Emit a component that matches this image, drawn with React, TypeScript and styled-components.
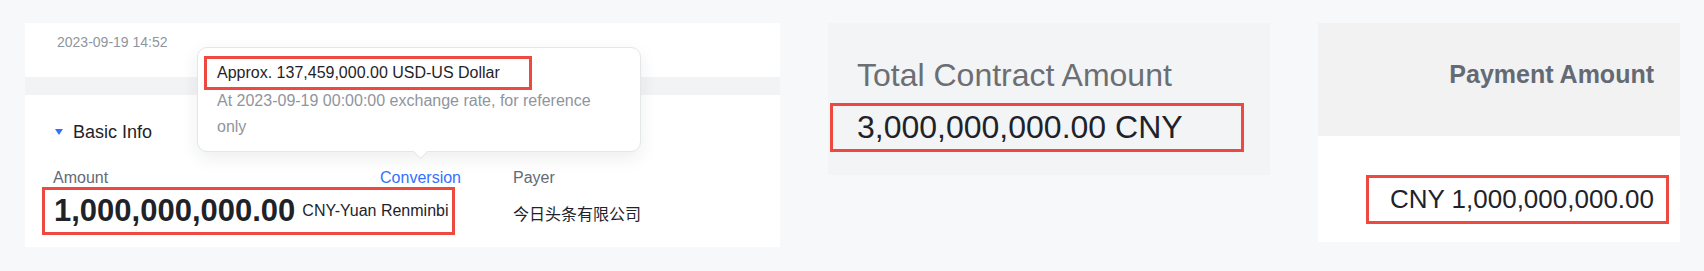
import React from 'react';
import styled, { createGlobalStyle } from 'styled-components';

const GlobalStyle = createGlobalStyle`
  html, body {
    margin: 0;
    padding: 0;
    height: 100%;
    background: #f7f8fa;
  }
  body {
    font-family: "Liberation Sans", Arial, "Noto Sans CJK SC", sans-serif;
    color: #1f2329;
  }
`;

const Page = styled.div`
  display: flex;
  align-items: flex-start;
  gap: 48px;
  padding: 23px 0 0 25px;
  height: 271px;
  box-sizing: border-box;
  overflow: hidden;
`;

const Highlight = styled.div<{ $width?: number }>`
  display: inline-flex;
  align-items: center;
  box-sizing: border-box;
  border: 3px solid #ec4a41;
  ${(p) => (p.$width ? `width: ${p.$width}px;` : '')}
  white-space: nowrap;
  overflow: hidden;
`;

/* ---------- detail panel ---------- */

const DetailPanel = styled.div`
  position: relative;
  width: 755px;
  height: 224px;
  display: flex;
  flex-direction: column;
  background: #f2f3f5;
`;

const TopSection = styled.div`
  background: #fff;
  height: 54px;
  padding-left: 32px;
  overflow: hidden;
  box-sizing: border-box;
`;

// last line of the message above, scrolled almost out of view
const ClippedLine = styled.div`
  margin-top: -19px;
  font-size: 14px;
  line-height: 20px;
  color: #8f959e;
  white-space: nowrap;
`;

const TimeText = styled.div`
  margin-top: 8px;
  font-size: 14px;
  line-height: 20px;
  color: #8f959e;
`;

const InfoCard = styled.div`
  margin-top: 18px;
  flex: 1;
  background: #fff;
  padding: 25px 0 0 28px;
`;

const SectionTitle = styled.div`
  display: flex;
  align-items: center;
  gap: 10px;
  font-size: 18px;
  line-height: 24px;
  font-weight: 500;
  color: #1f2329;
  padding-left: 2px;
`;

const Caret = styled.span`
  width: 0;
  height: 0;
  border-left: 4px solid transparent;
  border-right: 4px solid transparent;
  border-top: 6px solid #3370ff;
`;

const FieldGrid = styled.div`
  margin-top: 23px;
  display: grid;
  grid-template-columns: 408px auto;
  column-gap: 52px;
  align-items: center;
`;

const LabelRow = styled.div`
  display: flex;
  justify-content: space-between;
`;

const Label = styled.span`
  font-size: 16px;
  line-height: 22px;
  color: #646a73;
`;

const LinkText = styled.span`
  font-size: 16px;
  line-height: 22px;
  color: #3370ff;
`;

const AmountBox = styled(Highlight)`
  margin: -2px 0 0 -11px;
  height: 48px;
  padding-left: 9px;
  gap: 7px;
`;

const BigNumber = styled.span`
  font-size: 31px;
  line-height: 42px;
  font-weight: 700;
  color: #1f2329;
`;

const Unit = styled.span`
  font-size: 16px;
  color: #1f2329;
`;

const PlainValue = styled.div`
  font-size: 16px;
  line-height: 22px;
  color: #1f2329;
  padding-top: 6px;
`;

const Popover = styled.div`
  position: absolute;
  left: 172px;
  top: 24px;
  width: 444px;
  height: 105px;
  box-sizing: border-box;
  padding: 8px 0 0 6px;
  background: #fff;
  border: 1px solid #e4e6ea;
  border-radius: 10px;
  box-shadow: 0 6px 18px rgba(31, 35, 41, 0.08);
`;

const PopoverArrow = styled.span`
  position: absolute;
  left: 217px;
  bottom: -6px;
  width: 10px;
  height: 10px;
  background: #fff;
  border-right: 1px solid #e4e6ea;
  border-bottom: 1px solid #e4e6ea;
  transform: rotate(45deg);
`;

const PopoverMain = styled(Highlight)`
  height: 34px;
  padding-left: 10px;
  font-size: 16px;
  color: #1f2329;
`;

const PopoverNote = styled.div`
  margin: -2px 0 0 13px;
  width: 400px;
  font-size: 16px;
  line-height: 26px;
  color: #8f959e;
`;

/* ---------- summary panels ---------- */

const SummaryPanel = styled.div`
  width: 442px;
  height: 152px;
  box-sizing: border-box;
  padding: 32px 0 0 2px;
  background: #f3f4f5;
`;

const SummaryTitle = styled.div`
  padding-left: 27px;
  font-size: 32px;
  line-height: 40px;
  color: #6b6e73;
`;

const SummaryBox = styled(Highlight)`
  margin-top: 8px;
  height: 49px;
  padding-left: 24px;
`;

const SummaryValue = styled.span`
  font-size: 32px;
  line-height: 43px;
  color: #1f2329;
`;

const TableCol = styled.div`
  width: 362px;
  display: flex;
  flex-direction: column;
`;

const TableHead = styled.div`
  height: 113px;
  box-sizing: border-box;
  padding: 35px 26px 0 0;
  background: #f2f2f2;
  text-align: right;
  font-size: 25px;
  line-height: 32px;
  font-weight: 700;
  color: #646a73;
`;

const TableCell = styled.div`
  height: 106px;
  box-sizing: border-box;
  padding: 39px 11px 0 0;
  background: #fff;
  display: flex;
  justify-content: flex-end;
  align-items: flex-start;
`;

const CellBox = styled(Highlight)`
  height: 49px;
  padding: 0 12px 0 21px;
`;

const CellValue = styled.span`
  font-size: 26px;
  line-height: 43px;
  color: #1f2329;
`;

const App = () => {
  return (
    <>
      <GlobalStyle />
      <Page>
        <DetailPanel>
          <TopSection>
            <ClippedLine>
              Your payment application was approved, please apply to the supplier and pay by yourself for any apply
            </ClippedLine>
            <TimeText>2023-09-19 14:52</TimeText>
          </TopSection>
          <InfoCard>
            <SectionTitle>
              <Caret />
              Basic Info
            </SectionTitle>
            <FieldGrid>
              <LabelRow>
                <Label>Amount</Label>
                <LinkText>Conversion</LinkText>
              </LabelRow>
              <Label>Payer</Label>
              <AmountBox $width={413}>
                <BigNumber>1,000,000,000.00</BigNumber>
                <Unit>CNY-Yuan Renminbi</Unit>
              </AmountBox>
              <PlainValue>今日头条有限公司</PlainValue>
            </FieldGrid>
          </InfoCard>
          <Popover>
            <PopoverMain $width={328}>Approx. 137,459,000.00 USD-US Dollar</PopoverMain>
            <PopoverNote>At 2023-09-19 00:00:00 exchange rate, for reference only</PopoverNote>
            <PopoverArrow />
          </Popover>
        </DetailPanel>

        <SummaryPanel>
          <SummaryTitle>Total Contract Amount</SummaryTitle>
          <SummaryBox $width={414}>
            <SummaryValue>3,000,000,000.00 CNY</SummaryValue>
          </SummaryBox>
        </SummaryPanel>

        <TableCol>
          <TableHead>Payment Amount</TableHead>
          <TableCell>
            <CellBox>
              <CellValue>CNY 1,000,000,000.00</CellValue>
            </CellBox>
          </TableCell>
        </TableCol>
      </Page>
    </>
  );
};

export default App;
